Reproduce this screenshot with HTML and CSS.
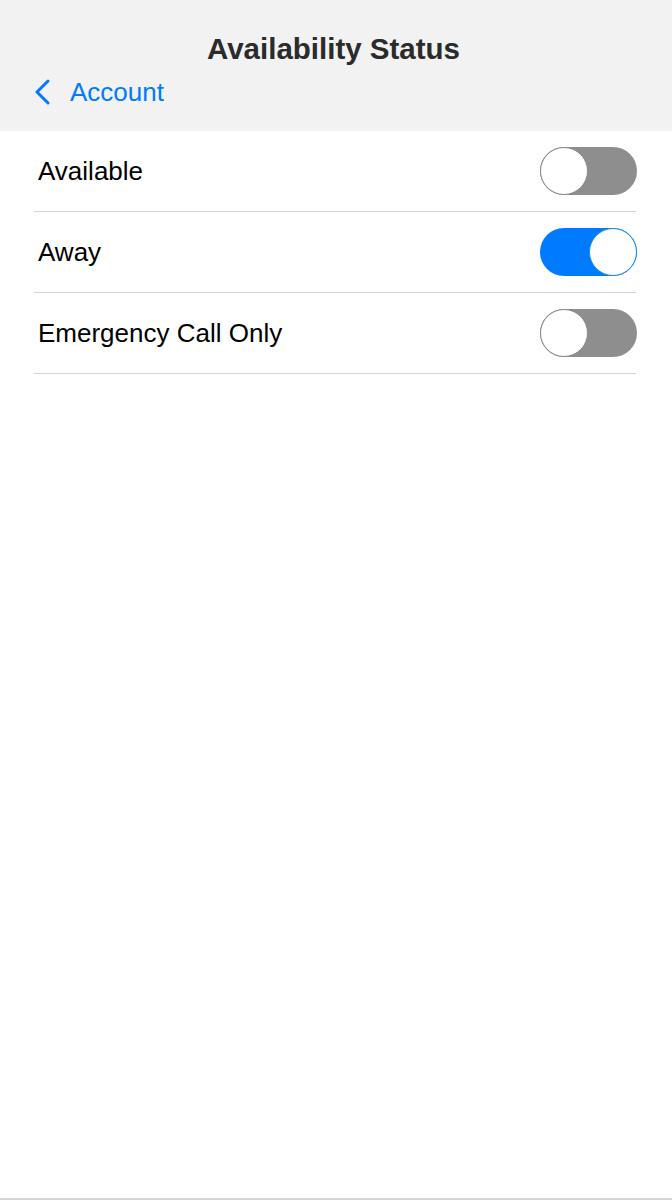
FILE: index.html
```html
<!DOCTYPE html>
<html>
<head>
<meta charset="utf-8">
<link rel="stylesheet" href="styles.css">
</head>
<body>
<div class="page">
  <header class="navbar">
    <h1 class="title">Availability Status</h1>
    <a class="back" href="#">
      <svg class="chev" width="18" height="26" viewBox="0 0 18 26"><polyline points="15,2 4,13 15,24" fill="none" stroke="#007aff" stroke-width="3" stroke-linecap="round" stroke-linejoin="round"/></svg>
      <span>Account</span>
    </a>
  </header>
  <ul class="list">
    <li class="row"><span class="label">Available</span><span class="toggle"><span class="knob"></span></span></li>
    <li class="row"><span class="label">Away</span><span class="toggle on"><span class="knob"></span></span></li>
    <li class="row"><span class="label">Emergency Call Only</span><span class="toggle"><span class="knob"></span></span></li>
  </ul>
  <div class="spacer"></div>
  <div class="bottom"></div>
</div>
</body>
</html>
```
FILE: styles.css
```css
html, body {
  margin: 0;
  padding: 0;
  background: #fff;
}
body {
  font-family: "Liberation Sans", Arial, sans-serif;
}
.page {
  height: 1200px;
  display: flex;
  flex-direction: column;
}
.navbar {
  background: #f2f2f2;
  height: 131px;
  box-sizing: border-box;
  padding-top: 31px;
  display: flex;
  flex-direction: column;
}
.title {
  margin: 0;
  padding-right: 5px;
  text-align: center;
  font-size: 29.5px;
  line-height: 36px;
  font-weight: bold;
  color: #2b2b2b;
}
.back {
  display: flex;
  align-items: center;
  gap: 19px;
  margin-top: 7px;
  margin-left: 33px;
  color: #007aff;
  text-decoration: none;
  font-size: 26px;
  line-height: 36px;
}
.chev {
  display: block;
}
.list {
  list-style: none;
  margin: 0 36px 0 34px;
  padding: 0;
}
.row {
  display: flex;
  align-items: center;
  justify-content: space-between;
  height: 80px;
  border-bottom: 1px solid #d4d4d4;
  padding-left: 4px;
}
.label {
  font-size: 26px;
  color: #000;
}
.toggle {
  position: relative;
  width: 97px;
  height: 48px;
  border-radius: 24px;
  background: #8e8e8e;
  margin-right: -1px;
  display: flex;
  justify-content: flex-start;
}
.knob {
  width: 48px;
  height: 48px;
  box-sizing: border-box;
  border-radius: 50%;
  background: #fff;
  border: 1.5px solid #8a8a8a;
}
.toggle.on {
  background: #007aff;
  justify-content: flex-end;
}
.toggle.on .knob {
  border-color: #1a8fe6;
}
.spacer {
  flex: 1;
}
.bottom {
  height: 2px;
  background: #d6d6d6;
}
```
